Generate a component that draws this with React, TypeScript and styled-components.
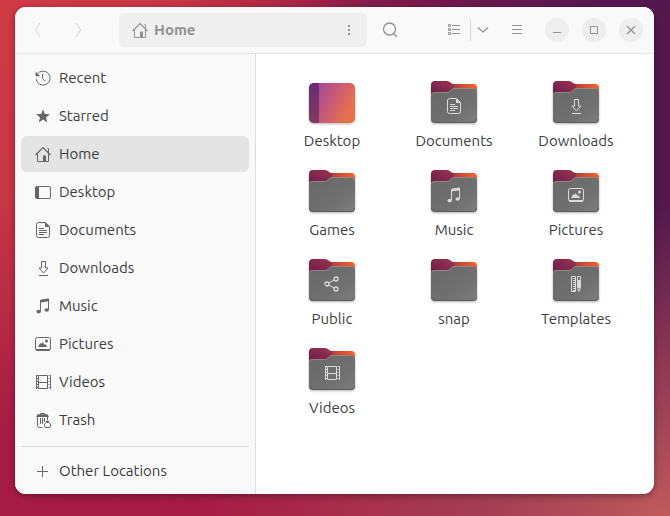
import React from "react";
import styled, { createGlobalStyle } from "styled-components";

const GlobalStyle = createGlobalStyle`
  * { box-sizing: border-box; }
  body {
    margin: 0;
    font-family: Ubuntu, "Noto Sans", "Open Sans", sans-serif;
    font-size: 15px;
    line-height: 20px;
    color: #3d3d3d;
  }
  button {
    font: inherit;
    color: inherit;
    border: 0;
    padding: 0;
    background: none;
  }
`;

const Wallpaper = styled.div`
  min-height: 100vh;
  display: flex;
  padding: 7px 16px 22px 15px;
  background:
    radial-gradient(ellipse 70% 60% at 100% 100%, #c05a5c 0%, #ae4a58d0 35%, #a0204800 100%),
    radial-gradient(ellipse 55% 85% at 0% 0%, #d03a46 0%, #c83646 45%, #b0204600 100%),
    linear-gradient(75deg, #a61b46 0%, #a41c46 45%, #54184f 90%);
`;

const Window = styled.div`
  flex: 1;
  display: flex;
  flex-direction: column;
  border-radius: 11px;
  overflow: hidden;
  background: #ffffff;
  box-shadow: 0 2px 7px rgba(0, 0, 0, 0.35);
`;

const HeaderBar = styled.header`
  display: flex;
  align-items: center;
  height: 47px;
  padding: 0 11px 0 3px;
  background: #f9f9f9;
  border-bottom: 1px solid #e4e4e4;
  color: #929292;
`;

const ToolButton = styled.button<{ $width: number; $faded?: boolean }>`
  display: flex;
  flex: none;
  align-items: center;
  justify-content: center;
  width: ${(p) => p.$width}px;
  height: 34px;
  color: ${(p) => (p.$faded ? "#d0d0d0" : "inherit")};
`;

const PathBar = styled.div`
  display: flex;
  flex: 1;
  align-items: center;
  justify-content: space-between;
  height: 34px;
  margin: 0 6px 0 21px;
  padding-left: 13px;
  border-radius: 6px;
  background: #efefef;
`;

const PathSegment = styled.button`
  display: flex;
  align-items: center;
  gap: 6px;
  font-weight: 700;
`;

const ViewSwitch = styled.div`
  display: flex;
  align-items: center;
  margin: 0 5px 0 31px;
`;

const Divider = styled.span`
  width: 1px;
  height: 22px;
  background: #d8d8d8;
`;

const WindowControls = styled.div`
  display: flex;
  gap: 13px;
  margin-left: 11px;
`;

const ControlButton = styled.button`
  display: flex;
  align-items: center;
  justify-content: center;
  width: 24px;
  height: 24px;
  border-radius: 50%;
  background: #eeeeee;
`;

const Body = styled.div`
  flex: 1;
  display: flex;
`;

const Sidebar = styled.nav`
  flex: none;
  display: flex;
  flex-direction: column;
  gap: 2px;
  width: 241px;
  padding: 6px 6px 5px;
  background: #f9f9f9;
  border-right: 1px solid #dedede;
`;

const Place = styled.button<{ $active?: boolean }>`
  display: flex;
  align-items: center;
  gap: 8px;
  height: 36px;
  padding: 0 14px;
  border-radius: 6px;
  text-align: left;
  background: ${(p) => (p.$active ? "#e4e4e4" : "transparent")};

  svg {
    color: #666666;
  }
`;

const Rule = styled.hr`
  width: 100%;
  height: 1px;
  margin: 6px 0 4px;
  border: 0;
  background: #d9d9d9;
`;

const Files = styled.main`
  flex: 1;
  display: grid;
  grid-template-columns: repeat(auto-fill, minmax(110px, 1fr));
  align-content: start;
  row-gap: 19px;
  padding: 27px 17px 20px 15px;
`;

const Tile = styled.button`
  display: flex;
  flex-direction: column;
  align-items: center;
  gap: 6px;
`;

const TileArt = styled.svg`
  display: block;
  overflow: visible;
  filter: drop-shadow(0 1px 1px rgba(0, 0, 0, 0.3));
`;

type GlyphName =
  | "recent" | "starred" | "home" | "desktop" | "documents" | "downloads"
  | "music" | "pictures" | "videos" | "trash" | "plus" | "share" | "templates";

const glyphs: Record<GlyphName, React.ReactNode> = {
  recent: (
    <>
      <path d="M2.300 4.200A7 7 0 1 1 1.200 9.200M7.500 4v4.500l2.700 2.700" />
      <path d="M0.600 1.600V6.200H5.200z" fill="currentColor" stroke="none" />
    </>
  ),
  starred: (
    <path d="M8 1.200l1.800 4.900 5.100.2-4 3.200 1.400 5L8 11.600l-4.300 2.900 1.400-5-4-3.200 5.100-.2z" fill="currentColor" stroke="none" />
  ),
  home: (
    <>
      <path d="M0.500 9L8 1.500l7.500 7.500" strokeWidth="1.2" />
      <path d="M2.500 7.500v8h11v-8M12.500 2.500h1v4" />
      <path d="M8 9.500h3v6H8z" fill="currentColor" stroke="none" />
    </>
  ),
  desktop: (
    <>
      <rect x="0.5" y="2.5" width="15" height="12" rx="1.5" />
      <path d="M1 3h3v11H1z" fill="currentColor" stroke="none" />
    </>
  ),
  documents: (
    <>
      <path d="M10.500 0.500h-7a2 2 0 0 0-2 2v11a2 2 0 0 0 2 2h9a2 2 0 0 0 2-2v-9zM4 6.500h5M4 8.500h8M4 10.500h8M4 12.500h5" />
      <path d="M10 0.500v4.500h4.500z" fill="currentColor" stroke="none" />
    </>
  ),
  downloads: <path d="M6.500 1.500h4V8H13l-4.500 5L4 8h2.500zM4 15.500h9" />,
  music: (
    <>
      <path d="M5.500 13V2.300l8-1.300v10.500" />
      <path d="M5.500 2l8-1.500v2.800L5.500 4.600z" fill="currentColor" stroke="none" />
      <ellipse cx="3.7" cy="13.6" rx="2.2" ry="1.8" fill="currentColor" stroke="none" />
      <ellipse cx="11.7" cy="12" rx="2.2" ry="1.8" fill="currentColor" stroke="none" />
    </>
  ),
  pictures: (
    <>
      <rect x="0.5" y="1.5" width="15" height="12.5" rx="2" />
      <path d="M0.500 13h15a2 2 0 0 1-2 2h-11a2 2 0 0 1-2-2zM3 11l2.200-4 1.200 1 1.200-2 2 3 1-1 1.400 3z" fill="currentColor" stroke="none" />
      <circle cx="11.5" cy="5" r="1.5" fill="currentColor" stroke="none" />
    </>
  ),
  videos: (
    <>
      <path d="M3.500 1.500h9v13h-9zM3.500 8.500h9M1.500 1v14M15.500 1v14" />
      <path d="M2.500 1v14M14 1v14" strokeDasharray="1 2" />
    </>
  ),
  trash: (
    <>
      <path d="M5.500 2.500v-1h4v1M2.500 4.500v9a2 2 0 0 0 2 2h3M12.500 4.500v4M5.500 6v6M7.500 6v6M9.500 6v4" />
      <path d="M1 5l1.500-2.800h10L14 5z" fill="currentColor" stroke="none" />
      <path d="M11 9.500h3M11.500 10.500a3 3 0 0 0-2 3.500q.2 1.500 1.500 1.500h3q1.300 0 1.500-1.500a3 3 0 0 0-2-3.500z" />
    </>
  ),
  plus: <path d="M2 8.500h11M7.500 3v11" />,
  share: (
    <>
      <circle cx="3" cy="8" r="2" strokeWidth="1.3" />
      <circle cx="12" cy="3" r="2" strokeWidth="1.3" />
      <circle cx="12" cy="13" r="2" strokeWidth="1.3" />
      <path d="M4.800 7l5.400-3.100M4.800 9l5.400 3.100" />
    </>
  ),
  templates: (
    <>
      <path d="M3.500 0.500h4v15h-4z" />
      <path d="M6 2v13" strokeDasharray="1 1" strokeWidth="2" />
      <path d="M9.500 0.500h3v11l-1.500 4-1.500-4z" />
      <path d="M9.500 4h3v8h-3z" fill="currentColor" stroke="none" />
    </>
  ),
};

const Glyph = ({ name }: { name: GlyphName }) => (
  <svg width="16" height="16" viewBox="0 0 16 16" fill="none" stroke="currentColor" aria-hidden="true">
    {glyphs[name]}
  </svg>
);

const LineIcon = ({ d, size = 16, weight = 1 }: { d: string; size?: number; weight?: number }) => (
  <svg width={size} height={size} viewBox={`0 0 ${size} ${size}`} fill="none" stroke="currentColor" strokeWidth={weight} aria-hidden="true">
    <path d={d} />
  </svg>
);

const FolderArt = ({ glyph }: { glyph?: GlyphName }) => (
  <TileArt width="46" height="44" viewBox="0 0 46 44" aria-hidden="true">
    <defs>
      <linearGradient id="folder-back" x1="0" x2="1">
        <stop offset="0.25" stopColor="#a8363e" />
        <stop offset="0.6" stopColor="#d04e34" />
        <stop offset="1" stopColor="#f4642c" />
      </linearGradient>
      <linearGradient id="folder-tab" x1="0" y1="1" x2="1" y2="0">
        <stop offset="0.2" stopColor="#74204f" />
        <stop offset="0.8" stopColor="#93304c" />
      </linearGradient>
      <linearGradient id="folder-front" x1="0" y1="0" x2="1" y2="1">
        <stop offset="0" stopColor="#686868" />
        <stop offset="0.65" stopColor="#707070" />
        <stop offset="1" stopColor="#7e7e7e" />
      </linearGradient>
    </defs>
    <path d="M10 3h32a4 4 0 0 1 4 4v14H10z" fill="url(#folder-back)" />
    <path d="M0 4a4 4 0 0 1 4-4h12q2 0 3.500 1.500t3.500 1.500v4l-4 6H0z" fill="url(#folder-tab)" />
    <path d="M0 14a3 3 0 0 1 3-3h13q2 0 3-1.500l1-1Q21 7 23 7h19a4 4 0 0 1 4 4v27a4 4 0 0 1-4 4H4a4 4 0 0 1-4-4z" fill="url(#folder-front)" />
    <path d="M0.500 38a3.500 3.500 0 0 0 3.500 3.500h38a3.500 3.500 0 0 0 3.500-3.500" fill="none" stroke="#5c5c5c" />
    <path d="M0.500 13.500a3 3 0 0 1 3-2h12.500q2 0 3.500-1.500l1-1Q21.500 7.500 23 7.500h19a3 3 0 0 1 3.500 3" fill="none" stroke="#92867f" />
    {glyph && (
      <g transform="translate(15 17)" color="#dadada" fill="none" stroke="currentColor">
        {glyphs[glyph]}
      </g>
    )}
  </TileArt>
);

const DesktopArt = () => (
  <TileArt width="46" height="44" viewBox="0 0 46 44" aria-hidden="true">
    <defs>
      <linearGradient id="desktop-fill" x1="0" y1="0.15" x2="1" y2="0.6">
        <stop offset="0.2" stopColor="#ac4c90" />
        <stop offset="0.55" stopColor="#cc5a74" />
        <stop offset="0.9" stopColor="#e47050" />
      </linearGradient>
      <linearGradient id="desktop-dock" x1="0" y1="0" x2="0" y2="1">
        <stop offset="0" stopColor="#6a2a76" />
        <stop offset="1" stopColor="#843860" />
      </linearGradient>
    </defs>
    <rect y="2" width="46" height="40" rx="5" fill="url(#desktop-fill)" />
    <path d="M10 2H5a5 5 0 0 0-5 5v30a5 5 0 0 0 5 5h5z" fill="url(#desktop-dock)" />
  </TileArt>
);

const places: { label: string; glyph: GlyphName }[] = [
  { label: "Recent", glyph: "recent" },
  { label: "Starred", glyph: "starred" },
  { label: "Home", glyph: "home" },
  { label: "Desktop", glyph: "desktop" },
  { label: "Documents", glyph: "documents" },
  { label: "Downloads", glyph: "downloads" },
  { label: "Music", glyph: "music" },
  { label: "Pictures", glyph: "pictures" },
  { label: "Videos", glyph: "videos" },
  { label: "Trash", glyph: "trash" },
];

const folders: { label: string; glyph?: GlyphName }[] = [
  { label: "Documents", glyph: "documents" },
  { label: "Downloads", glyph: "downloads" },
  { label: "Games" },
  { label: "Music", glyph: "music" },
  { label: "Pictures", glyph: "pictures" },
  { label: "Public", glyph: "share" },
  { label: "snap" },
  { label: "Templates", glyph: "templates" },
  { label: "Videos", glyph: "videos" },
];

export default function App() {
  return (
    <>
      <GlobalStyle />
      <Wallpaper>
        <Window>
          <HeaderBar>
            <ToolButton $width={40} $faded disabled aria-label="Back">
              <LineIcon d="M10 1L5.500 8l4.500 7" />
            </ToolButton>
            <ToolButton $width={40} $faded disabled aria-label="Forward">
              <LineIcon d="M6 1l4.500 7L6 15" />
            </ToolButton>
            <PathBar>
              <PathSegment>
                <Glyph name="home" />
                Home
              </PathSegment>
              <ToolButton $width={36} aria-label="Location menu">
                <svg width="16" height="16" viewBox="0 0 16 16" fill="currentColor" aria-hidden="true">
                  <path d="M7 3h2v2H7zM7 7h2v2H7zM7 11h2v2H7z" />
                </svg>
              </ToolButton>
            </PathBar>
            <ToolButton $width={34} aria-label="Search">
              <LineIcon d="M13.500 7a6 6 0 1 1-12 0a6 6 0 1 1 12 0M11.300 11.300l3.500 3.500" weight={1.3} />
            </ToolButton>
            <ViewSwitch>
              <ToolButton $width={32} aria-label="List view">
                <LineIcon d="M2.500 2.500h2v2h-2zM2.500 6.500h2v2h-2zM2.500 10.500h2v2h-2zM6 3.500h8M6 7.500h8M6 11.500h8" />
              </ToolButton>
              <Divider />
              <ToolButton $width={24} aria-label="View options">
                <LineIcon d="M3 5.500l5 4.500 5-4.500" weight={1.2} />
              </ToolButton>
            </ViewSwitch>
            <ToolButton $width={34} aria-label="Main menu">
              <LineIcon d="M3 3.500h10M3 7.500h10M3 11.500h10" />
            </ToolButton>
            <WindowControls>
              <ControlButton aria-label="Minimize">
                <LineIcon d="M4 10.500h8" />
              </ControlButton>
              <ControlButton aria-label="Maximize">
                <LineIcon d="M4.500 4.500h7v7h-7z" />
              </ControlButton>
              <ControlButton aria-label="Close">
                <LineIcon d="M4 4l8 8M12 4l-8 8" weight={1.3} />
              </ControlButton>
            </WindowControls>
          </HeaderBar>
          <Body>
            <Sidebar aria-label="Places">
              {places.map((place) => (
                <Place key={place.label} $active={place.label === "Home"}>
                  <Glyph name={place.glyph} />
                  {place.label}
                </Place>
              ))}
              <Rule />
              <Place>
                <Glyph name="plus" />
                Other Locations
              </Place>
            </Sidebar>
            <Files>
              <Tile>
                <DesktopArt />
                Desktop
              </Tile>
              {folders.map((folder) => (
                <Tile key={folder.label}>
                  <FolderArt glyph={folder.glyph} />
                  {folder.label}
                </Tile>
              ))}
            </Files>
          </Body>
        </Window>
      </Wallpaper>
    </>
  );
}
